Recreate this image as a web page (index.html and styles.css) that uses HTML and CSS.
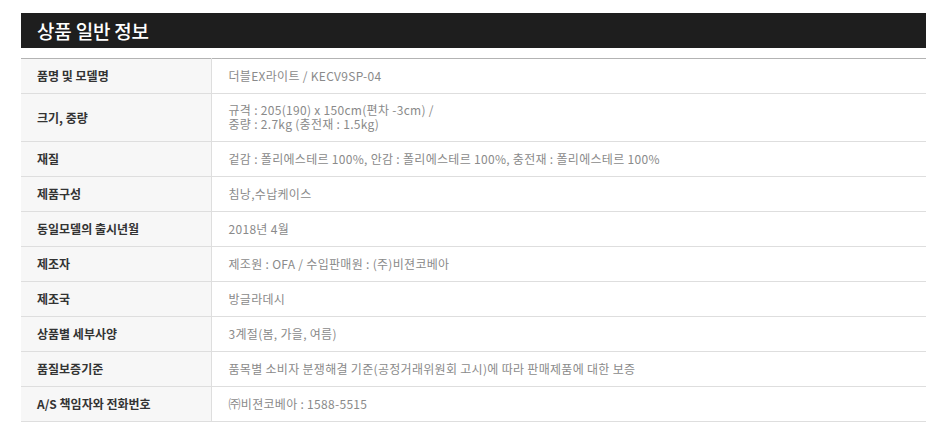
FILE: index.html
```html
<!DOCTYPE html>
<html>
<head>
    <meta http-equiv="Content-Type" content="text/html; charset=utf-8">
    <title>상품 일반 정보</title>
    <link rel="stylesheet" href="styles.css">
</head>
<body>
    <div class="infoBox">
        <h2 class="infoTit">상품 일반 정보</h2>
        <table class="infoTable">
            <colgroup>
                <col class="colTh">
                <col>
            </colgroup>
            <tr><th>품명 및 모델명</th><td>더블EX라이트 / KECV9SP-04</td></tr>
            <tr><th>크기, 중량</th><td class="twoLine">규격 : 205(190) x 150cm(편차 -3cm) /<br>중량 : 2.7kg (충전재 : 1.5kg)</td></tr>
            <tr><th>재질</th><td>겉감 : 폴리에스테르 100%, 안감 : 폴리에스테르 100%, 충전재 : 폴리에스테르 100%</td></tr>
            <tr><th>제품구성</th><td>침낭,수납케이스</td></tr>
            <tr><th>동일모델의 출시년월</th><td>2018년 4월</td></tr>
            <tr><th>제조자</th><td>제조원 : OFA / 수입판매원 : (주)비젼코베아</td></tr>
            <tr><th>제조국</th><td>방글라데시</td></tr>
            <tr><th>상품별 세부사양</th><td>3계절(봄, 가을, 여름)</td></tr>
            <tr><th>품질보증기준</th><td>품목별 소비자 분쟁해결 기준(공정거래위원회 고시)에 따라 판매제품에 대한 보증</td></tr>
            <tr><th>A/S 책임자와 전화번호</th><td>㈜비젼코베아 : 1588-5515</td></tr>
        </table>
    </div>
</body>
</html>
```

FILE: styles.css
```css
body,h2,table,th,td{margin:0;padding:0;border:0;}
body{font-size:12px; font-family:"Noto Sans CJK KR","Noto Sans",sans-serif; background:#fff;}

.infoBox{ width: 905px; margin: 13px 0 0 21px;}
.infoTit{ height: 35px; line-height: 35px; padding-left: 16px; background: #1e1e1e; color: #fff; font-size: 19px; font-weight: 500; letter-spacing: -0.2px;}

.infoTable{ width: 100%; margin-top: 10px; border-collapse: collapse; border-top: 1px solid #b3b3b3;}
.infoTable .colTh{ width: 190px;}
.infoTable th, .infoTable td{ padding: 10px 17px 10px 16px; line-height: 14px; font-size: 12px; text-align: left; vertical-align: middle; border-bottom: 1px solid #dedede;}
.infoTable th{ background: #f7f7f7; color: #333; font-weight: 700; border-right: 1px solid #dedede; letter-spacing: 0;}
.infoTable td{ color: #8a8a8a; padding-left: 17px; font-weight: 400; letter-spacing: 0.3px;}
.infoTable td.twoLine{ padding-top: 9px; padding-bottom: 10px;}
```
